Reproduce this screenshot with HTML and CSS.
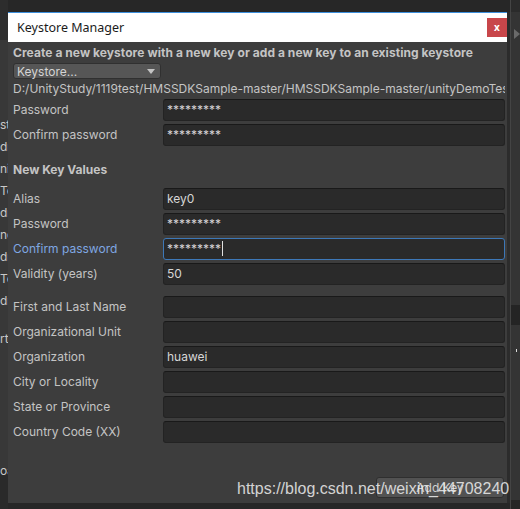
FILE: index.html
```html
<!DOCTYPE html>
<html lang="en">
<head>
  <meta charset="UTF-8">
  <meta name="viewport" content="width=device-width, initial-scale=1.0">
  <title>Keystore Manager</title>
  <link rel="stylesheet" href="styles.css">
</head>
<body>
  <div class="desk">
    <!-- editor behind the dialog, left edge -->
    <div class="side side-left">
      <div class="frag first">st</div>
      <div class="frag">dr</div>
      <div class="frag">ni</div>
      <div class="frag">Te</div>
      <div class="frag">dr</div>
      <div class="frag">nd</div>
      <div class="frag">dr</div>
      <div class="frag">Te</div>
      <div class="frag">dr</div>
      <div class="frag gap">rti</div>
      <div class="frag far">oa</div>
    </div>

    <div class="dialog">
      <div class="titlebar">
        <span class="title">Keystore Manager</span>
        <button class="close">x</button>
      </div>

      <div class="content">
        <p class="intro">Create a new keystore with a new key or add a new key to an existing keystore</p>
        <div class="dropdown">
          <span>Keystore...</span>
          <span class="arrow"></span>
        </div>
        <p class="path">D:/UnityStudy/1119test/HMSSDKSample-master/HMSSDKSample-master/unityDemoTest/keystore</p>

        <div class="rows top-rows">
          <div class="row"><label>Password</label><div class="field">*********</div></div>
          <div class="row"><label>Confirm password</label><div class="field">*********</div></div>
        </div>

        <h3 class="section">New Key Values</h3>

        <div class="rows">
          <div class="row"><label>Alias</label><div class="field">key0</div></div>
          <div class="row"><label>Password</label><div class="field">*********</div></div>
          <div class="row focused"><label>Confirm password</label><div class="field"><span class="caret">*********</span></div></div>
          <div class="row"><label>Validity (years)</label><div class="field">50</div></div>
        </div>

        <div class="rows dname">
          <div class="row"><label>First and Last Name</label><div class="field"></div></div>
          <div class="row"><label>Organizational Unit</label><div class="field"></div></div>
          <div class="row"><label>Organization</label><div class="field">huawei</div></div>
          <div class="row"><label>City or Locality</label><div class="field"></div></div>
          <div class="row"><label>State or Province</label><div class="field"></div></div>
          <div class="row"><label>Country Code (XX)</label><div class="field"></div></div>
        </div>

        <div class="footer">
          <button class="add-key">Add Key</button>
        </div>
      </div>

      <!-- csdn watermark over the screenshot -->
      <div class="watermark">https://blog.csdn.net/weixin_44708240</div>
    </div>

    <!-- editor behind the dialog, right edge -->
    <div class="side side-right">
      <span class="play"></span>
      <div class="band"></div>
      <span class="dot"></span>
    </div>
  </div>
</body>
</html>
```

FILE: styles.css
```css
body {
  margin: 0;
  padding: 0;
  background-color: #272727;
  font-family: 'Inter', 'Noto Sans', sans-serif;
  color: #c4c4c4;
}
.desk {
  display: flex;
  height: 509px;
  overflow: hidden;
}

/* 뒤쪽 에디터 조각 */
.side {
  background-color: #363636;
}
.side-left {
  width: 9px;
  overflow: hidden;
  padding-top: 114px;
  font-size: 12px;
  background: linear-gradient(#2d2d2d 0, #2d2d2d 40px, #383838 40px, #383838 470px, #2a2a2a 470px);
}
.frag {
  height: 22px;
  line-height: 22px;
  white-space: nowrap;
  color: #c8c8c8;
}
.frag.gap {
  margin-top: 16px;
}
.frag.far {
  margin-top: 110px;
}
.side-right {
  flex: 1;
  display: flex;
  flex-direction: column;
  border-left: 1px solid #444;
  background: linear-gradient(#2b2b2b 0, #2b2b2b 12px, #343434 12px, #343434 500px, #262626 500px);
}
.play {
  margin: 29px 0 0 3px;
  width: 0;
  height: 0;
  border-top: 5px solid transparent;
  border-bottom: 5px solid transparent;
  border-left: 6px solid #6a6a6a;
}
.band {
  margin-top: 266px;
  height: 20px;
  background-color: #242424;
}
.dot {
  margin: 24px 0 0 5px;
  width: 1px;
  height: 3px;
  background-color: #ddd;
}

/* 다이얼로그 */
.dialog {
  position: relative;
  width: 499px;
  height: 491px;
  margin-top: 12px;
  background-color: #3d3d3d;
  border-right: 3px solid #2c2c2c;
}
.titlebar {
  display: flex;
  align-items: center;
  height: 29px;
  border-top: 1px solid #3d8fdc;
  background-color: #fff;
  padding-left: 9px;
}
.title {
  flex: 1;
  font-family: 'Noto Sans', sans-serif;
  font-size: 12.5px;
  color: #1b1b1b;
}
.close {
  width: 20px;
  height: 19px;
  padding: 0;
  border: none;
  background-color: #c8464a;
  color: #fff;
  font-family: 'Noto Sans', sans-serif;
  font-size: 10px;
  font-weight: bold;
  line-height: 17px;
}

.content {
  padding: 2px 2px 0 5px;
  font-size: 12px;
}
.intro, .section {
  margin: 0;
  font-weight: bold;
  font-size: 12px;
  line-height: 18px;
  color: #c4c4c4;
}
.intro {
  letter-spacing: 0.06px;
}
.dropdown {
  display: flex;
  align-items: center;
  justify-content: space-between;
  box-sizing: border-box;
  width: 148px;
  height: 16px;
  margin-top: 1px;
  padding: 0 5px 0 3px;
  background-color: #565656;
  border: 1px solid #303030;
  border-radius: 3px;
  color: #d4d4d4;
}
.arrow {
  width: 0;
  height: 0;
  border-left: 4px solid transparent;
  border-right: 4px solid transparent;
  border-top: 5px solid #c4c4c4;
}
.path {
  margin: 1px 0 0 0;
  line-height: 18px;
  white-space: nowrap;
  overflow: hidden;
  color: #c4c4c4;
}

.rows {
  display: flex;
  flex-direction: column;
  gap: 3px;
  margin-top: 9px;
}
.top-rows {
  margin-top: 1px;
}
.dname {
  margin-top: 11px;
}
.section {
  margin-top: 15px;
}
.row {
  display: flex;
  align-items: center;
  height: 22px;
}
.row label {
  width: 150px;
  margin-top: -2px;
}
.field {
  flex: 1;
  box-sizing: border-box;
  height: 22px;
  padding: 0 3px;
  line-height: 20px;
  background-color: #2a2a2a;
  border: 1px solid #232323;
  border-top-color: #191919;
  border-radius: 3px;
  color: #d6d6d6;
}
.focused label {
  color: #7fa7e2;
}
.focused .field {
  border-color: #3d78b8;
}
.caret {
  border-right: 1px solid #e0e0e0;
  padding-right: 1px;
}

.footer {
  display: flex;
  justify-content: flex-end;
  margin-top: 34px;
}
.add-key {
  width: 128px;
  height: 21px;
  margin-right: 1px;
  padding: 0;
  background-color: #525252;
  border: 1px solid #2f2f2f;
  border-radius: 3px;
  color: #d0d0d0;
  font-family: 'Inter', sans-serif;
  font-size: 12px;
}

.watermark {
  position: absolute;
  left: 229px;
  top: 468px;
  font-family: 'Liberation Sans', Arial, sans-serif;
  font-size: 16px;
  color: rgba(240, 240, 240, 0.85);
  white-space: nowrap;
}
```
